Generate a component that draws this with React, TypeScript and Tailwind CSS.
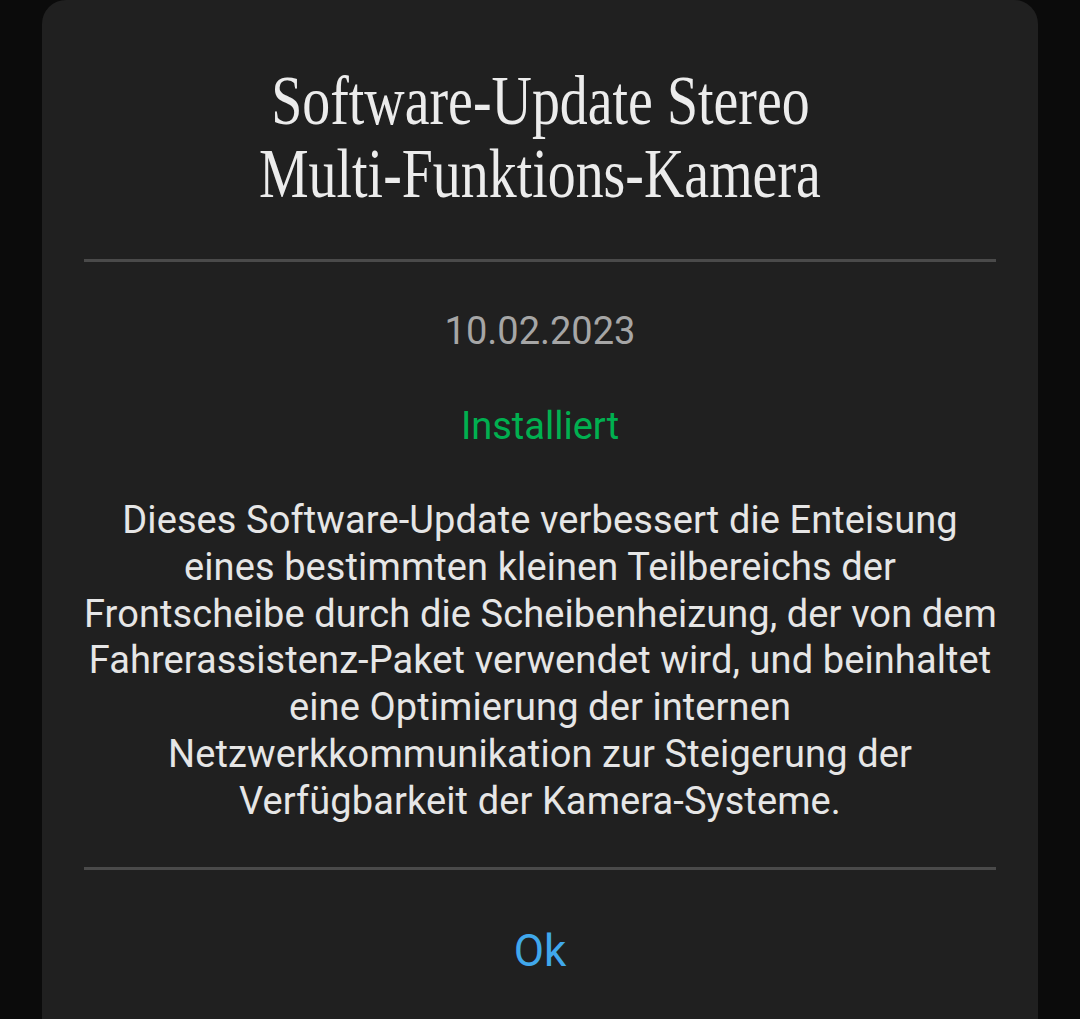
import React from "react";

const bodyLines = [
  "Dieses Software-Update verbessert die Enteisung",
  "eines bestimmten kleinen Teilbereichs der",
  "Frontscheibe durch die Scheibenheizung, der von dem",
  "Fahrerassistenz-Paket verwendet wird, und beinhaltet",
  "eine Optimierung der internen",
  "Netzwerkkommunikation zur Steigerung der",
  "Verfügbarkeit der Kamera-Systeme.",
];

export default function App() {
  return (
    <div className="w-[1080px] h-[1019px] overflow-hidden bg-[#0b0b0b] flex justify-center">
      <div className="w-[996px] h-[1060px] bg-[#202020] rounded-t-[24px] px-[42px] pt-[65px] text-center">
        <div className="font-['Liberation_Serif',serif] text-[69px] leading-[73px] text-[#ececec]">
          <div>
            <span className="inline-block scale-x-[0.81] whitespace-nowrap">Software-Update Stereo</span>
          </div>
          <div>
            <span className="inline-block scale-x-[0.81] whitespace-nowrap">Multi-Funktions-Kamera</span>
          </div>
        </div>
        <div className="mt-[48px] h-[3px] bg-[#4a4a4a]" />
        <div className="font-['Roboto',sans-serif]">
          <div className="mt-[46px] text-[38px] leading-[46px] text-[#a6a6a6]">10.02.2023</div>
          <div className="mt-[49px] text-[38px] leading-[46px] text-[#00b050]">Installiert</div>
          <div className="mt-[48px] text-[38px] leading-[46.8px] tracking-[0.1px] text-[#e6e6e6]">
            {bodyLines.map((l) => (
              <div key={l} className="whitespace-nowrap">{l}</div>
            ))}
          </div>
        </div>
        <div className="mt-[42px] h-[3px] bg-[#4a4a4a]" />
        <div className="mt-[58px] font-['Roboto',sans-serif] text-[44px] leading-[46px] text-[#40a8ec]">Ok</div>
      </div>
    </div>
  );
}
